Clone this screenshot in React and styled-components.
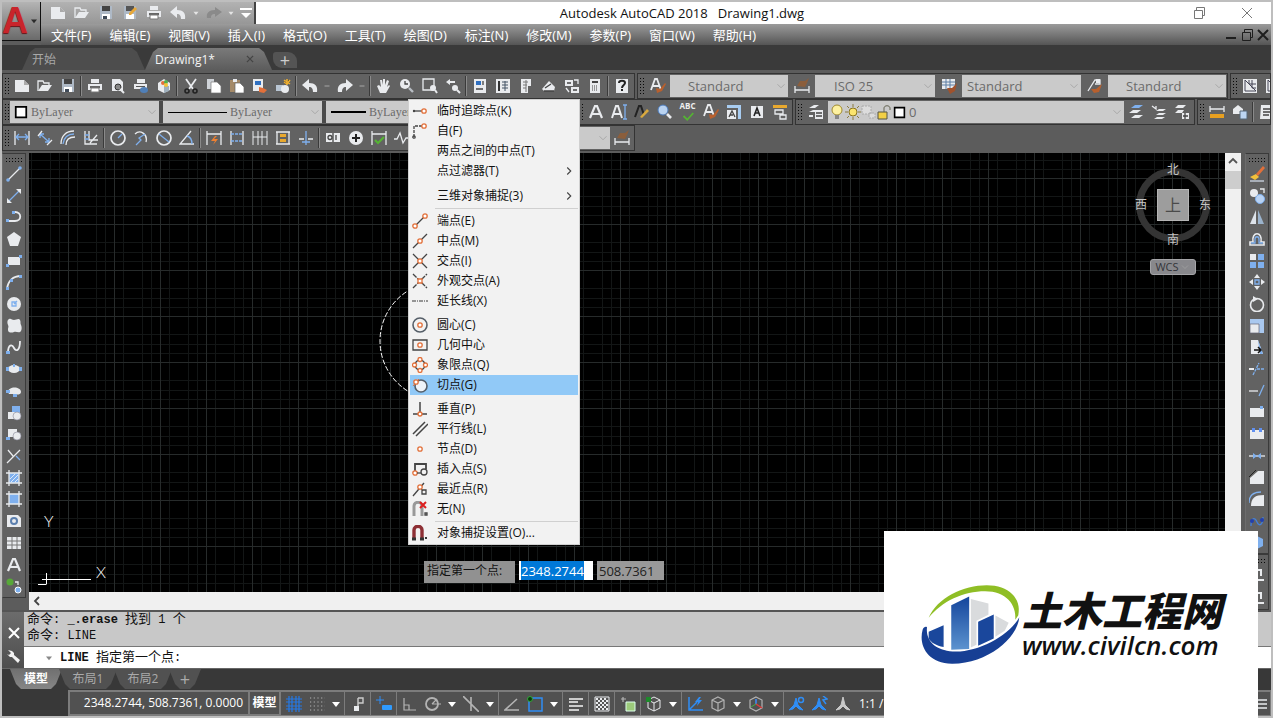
import { useEffect, useRef, useState } from 'react';
import styled, { createGlobalStyle } from 'styled-components';

const W = '#e9ebee';
const B = '#7fb0ee';
const D = '#3f4a58';
const O = '#e2703a';

const line = { fill: 'none', stroke: W, strokeWidth: 1.3 };
const blue = { fill: 'none', stroke: B, strokeWidth: 1.3 };
const dark = { fill: 'none', stroke: '#444', strokeWidth: 1.3 };
const node = { fill: '#fff', stroke: O, strokeWidth: 1.3 };
const ghost = { fill: 'none', stroke: '#b4b4b4', strokeWidth: 1.2 };
const glow = { fill: 'none', stroke: '#2f8df5', strokeWidth: 1.5 };

const icons = {
  new: <><path d="M1 2h9l5 5v7H1z" fill={W} /><path d="M10 2v5h5" fill="#aaa" /></>,
  open: <><path d="M1 13V3h5l1 2h5v3" {...line} /><path d="M1 13l4-6h10l-4 6z" fill={W} /></>,
  save: <><path d="M2 1h12v13H2z" fill="#aeb9c6" /><path d="M4 1h8v5H4z" fill="#444" /><path d="M4 9h8v5H4z" fill="#fff" /><path d="M5 11h4v3H5z" fill={D} /></>,
  saveAs: <><path d="M2 1h12v13H2z" fill="#aeb9c6" /><path d="M4 1h8v5H4z" fill="#555" /><path d="M4 9h8v5H4z" fill="#fff" /><path d="M7 8l6-6 2 2-6 6H7z" fill="#e8a838" /></>,
  print: <><path d="M4 1h8v4H4zM1 6h14v6H1z" fill={W} /><path d="M3 8h10v2H3z" fill="#666" /><path d="M4 10h8v4H4z" fill="#fff" stroke="#777" /></>,
  preview: <><path d="M2 1h8l3 3v9H2z" fill={W} /><circle cx="8" cy="9" r="3" fill="#888" stroke="#333" /><path d="M10 11l4 4" stroke={W} strokeWidth="2" /></>,
  publish: <><path d="M4 1h8v4H4zM1 6h13v5H1z" fill={W} /><path d="M3 8h9v1H3z" fill="#555" /><ellipse cx="11" cy="12" rx="4" ry="3" fill="#4f7fb8" /></>,
  print3d: <><path d="M2 5l6-4 6 4v7l-6 3-6-3z" fill={W} /><path d="M8 8h5v5l-5 2z" fill="#9fb0bd" /><circle cx="7" cy="5" r="2" fill="#e2703a" /><circle cx="10" cy="4" r="2" fill="#4cae50" /><circle cx="10" cy="7" r="2" fill="#f1c232" /></>,
  cut: <><path d="M3 1l7 10M13 1L6 11" stroke={W} strokeWidth="1.8" /><circle cx="4" cy="13" r="2" fill="none" stroke="#222" strokeWidth="1.6" /><circle cx="12" cy="13" r="2" fill="none" stroke="#222" strokeWidth="1.6" /></>,
  copy: <><path d="M1 1h7v10H1z" fill="#cfd3d8" /><path d="M5 4h6l4 4v7H5z" fill="#fff" stroke="#777" strokeWidth=".7" /></>,
  paste: <><path d="M1 2h10v12H1z" fill="#a58a68" /><path d="M4 1h4v3H4z" fill={W} /><path d="M6 5h5l4 4v6H6z" fill="#fff" stroke="#666" strokeWidth=".7" /></>,
  match: <><path d="M1 1h10v12H1z" fill={W} /><path d="M3 3h6v4H3z" fill="#2f6fc0" /><path d="M7 9l4 1 4 2-3 3-5-1z" fill={O} /></>,
  block: <><path d="M1 7h7v6H1z" fill="#b9c6d4" /><circle cx="10" cy="11" r="4" fill={W} /><path d="M9 4l3 2 3-4M12 1v6M9 2l6 4" stroke="#f0b030" strokeWidth="1.5" /></>,
  undo: <path d="M0 7l7-6v4c6 0 9 3 8 9h-4c0-3-1-5-4-5v4z" fill={W} />,
  redo: <path d="M16 7L9 1v4c-6 0-9 3-8 9h4c0-3 1-5 4-5v4z" fill={W} />,
  redoDim: <path d="M16 7L9 2v3c-6 0-9 3-8 8h4c0-3 1-4 4-4v3z" fill="#8a8a8a" />,
  pan: <path d="M4 15L1 8l2-1 2 2-1-7h2l1 5V1h2v6l2-5 2 1-2 6 2-2 1 1-4 7z" fill={W} />,
  zoom: <><circle cx="6" cy="6" r="5" fill={W} /><path d="M6 3v3h3" {...dark} /><path d="M10 10l4 4" stroke="#b9bec4" strokeWidth="2.4" /></>,
  zoomWindow: <><path d="M1 1h11v11H1z" {...line} /><circle cx="11" cy="10" r="3" fill={W} /><path d="M13 12l2 3" stroke={W} strokeWidth="2" /></>,
  zoomPrev: <><path d="M1 4l4-3v2h5v2H5v2z" fill={W} /><circle cx="10" cy="10" r="3" fill={W} /><path d="M12 12l3 3" stroke={W} strokeWidth="2" /></>,
  props: <><path d="M2 1h12v14H2z" fill={W} /><path d="M4 3h5v4H4z" fill="#2f6fc0" /><path d="M4 11h7M11 3v4" {...dark} /></>,
  design: <><path d="M1 1h14v14H1z" fill={W} /><path d="M3 3h2v10H3z" fill="#333" /><path d="M7 4h6M7 7h6M7 10h6M10 3v10" stroke="#456" /></>,
  palette: <><path d="M3 1h10v7h-3v7H3z" fill={W} /><path d="M5 4h5M5 7h4M5 10h3M8 2v12" stroke="#777" /></>,
  sheet: <><path d="M1 11l7-8 6 6-1 4H3z" fill={W} /><path d="M4 10l6-4M3 13h10" {...dark} /></>,
  markup: <><path d="M1 2h8v6H1zM7 9h8v6H7z" fill={W} /><path d="M10 2h4v4M2 10l3 4" {...line} /><path d="M3 5h4M9 12h4" {...dark} /></>,
  calc: <><path d="M3 1h10v14H3z" fill={W} /><path d="M5 3h6v2H5z" fill="#444" /><path d="M5 8h6M5 10h6M5 12h6" stroke="#444" strokeDasharray="1 1" /></>,
  help: <><path d="M2 1h12v14H2z" fill={W} /><path d="M5 5c0-3 6-3 6 0 0 2-3 2-3 5M8 11v2" fill="none" stroke="#222" strokeWidth="2" /></>,
  brushText: <><path d="M1 12L5 1h2l4 11M3 8h6" {...line} strokeWidth="1.8" /><path d="M6 10l4 1 5-6 1 1-4 7-5 2z" fill="#b8602e" /></>,
  brushDim: <><path d="M1 8v7M15 8v7M1 12h14" {...line} /><path d="M3 8l3-5 5 0 4-3-2 5-2 4z" fill="#8b5e3c" /></>,
  brushTable: <><path d="M1 1h13v10H1z" fill={W} /><path d="M1 4h13M1 7h13M5 1v10M9 1v10" stroke="#5d7ea5" /><path d="M6 10l5 0 5-5-2 8-5 3z" fill="#a0522d" /></>,
  brushLeader: <><path d="M1 13L8 2h5v4H8" {...line} /><path d="M9 1h4v4H9z" fill={W} /><path d="M4 11l5 0 6-5-3 8-5 1z" fill="#b8602e" /></>,
  tableDraw: <><path d="M1 1h14v14H1z" fill={W} /><path d="M3 2v11h11zM7 2v4h7M10 2v8h4" stroke="#445" fill="none" /></>,
  tableEdit: <><path d="M1 1h14v14H1z" fill={W} /><path d="M3 2v11h11zM8 3l5 5" stroke="#445" fill="none" /></>,
  textA: <path d="M2 14L7 2h2l5 12M4 10h8" fill="none" stroke={W} strokeWidth="2.2" />,
  textCursor: <><path d="M1 14L5 2h2l4 12M3 10h6" {...line} strokeWidth="2" /><path d="M12 1h4M14 1v14M12 15h4" {...blue} /></>,
  textEdit: <><path d="M1 13L5 2h2l3 9" stroke="#222" fill="none" strokeWidth="2" /><path d="M6 13l7-8 2 2-7 7z" fill="#d9a93e" /></>,
  textFind: <><circle cx="6" cy="6" r="5" fill="#b9d2f0" stroke="#4b79b8" /><path d="M10 10l4 4" stroke={W} strokeWidth="2.6" /></>,
  spell: <path d="M2 8l5 5 8-9" fill="none" stroke="#55b334" strokeWidth="2.4" />,
  textScale: <><path d="M1 1h14v14h-3V4H1z" fill="#a8ccf0" /><path d="M1 6h9v9H1z" fill={W} /><path d="M3 13l3-6 3 6M4 11h3" {...dark} /></>,
  textBox: <><path d="M2 2h12v12H2z" fill={W} /><path d="M5 12l3-8 3 8M6 9h4" stroke="#222" fill="none" strokeWidth="1.6" /></>,
  textSpace: <><path d="M1 1h14v3H1z" fill="#e9a92e" /><path d="M3 6h8v4H3zM8 11h6v4H8z" {...line} /></>,
  layers: <><path d="M1 4l5-3h5L7 4zM1 8l4-2h2v2zM1 11h4v2H1z" fill={W} /><path d="M7 6h8v9H7z" fill={W} /><path d="M8 9h6M8 12h6" {...dark} /></>,
  layerBlue: <><path d="M3 4l4-3h8l-4 3z" fill={B} /><path d="M1 9l4-3h8l-4 3zM3 14l4-3h8l-4 3z" fill={W} /></>,
  layerMove: <><path d="M1 2l4 3V2" {...line} /><path d="M5 7l3-2h7l-3 2zM5 11l3-2h7l-3 2zM3 15l3-2h8l-3 2z" fill={W} /></>,
  layerState: <><path d="M1 4l3-3h8L9 4zM1 9l3-3h6L8 9z" fill={W} /><path d="M8 9h7v6H8z" fill={W} /><path d="M9 12h5M11 9v6" {...dark} /></>,
  bulb: <><circle cx="8" cy="6" r="5" fill="#fdf1a0" stroke="#a08a30" /><path d="M6 11h4v4H6z" fill="#888" /></>,
  sun: <><circle cx="8" cy="8" r="4" fill="#fbe46d" stroke="#8a7420" /><path d="M8 0v3M8 13v3M0 8h3M13 8h3M2 2l2 2M12 12l2 2M14 2l-2 2M2 14l2-2" stroke="#8a7a40" /></>,
  frozen: <path d="M1 2h9v8H1zM8 9h6v5H8z" fill="#dcdcdc" stroke="#aaa" strokeDasharray="2 1" />,
  lock: <><path d="M1 8h9v7H1z" fill="#f2cf45" stroke="#554" /><path d="M7 8V4c0-3 6-3 6 0v2" fill="none" stroke="#665" /></>,
  swatch: <path d="M2 2h12v12H2z" fill="#fff" stroke="#000" strokeWidth="2" />,
  measure: <><path d="M1 2v6M15 2v6M1 5h14" {...line} /><path d="M1 10h14v4H1z" fill="#e8a020" /></>,
  layerCopy: <><path d="M1 5l5-4 5 4v5H1z" fill={W} /><path d="M8 7h7v8H8z" fill="#bcd5f2" stroke="#567" /></>,
  list: <><path d="M2 1h12l-2 14H1z" fill={W} /><path d="M4 5h8M4 8h7M4 11h6" {...dark} /></>,
  dimLinear: <><path d="M1 1v14M15 1v14" {...line} /><path d="M2 7h12M5 4L2 7l3 3M11 4l3 3-3 3" {...blue} /></>,
  dimAligned: <><path d="M3 4l9 8M3 4v4M3 4h4M12 12V8M12 12H8" {...blue} /><path d="M1 6l4-5M10 15l5-5" {...line} /></>,
  dimArc: <><path d="M1 14C1 6 6 1 14 1M6 15c0-5 3-8 9-8" {...line} /><path d="M3 14C4 7 8 4 14 4" {...blue} /></>,
  dimOrd: <><path d="M2 1v13h12M6 1v9h9M7 13l7-8" {...line} /><path d="M2 5h4M2 9h4" {...blue} /></>,
  radius: <><circle cx="8" cy="8" r="7" {...line} strokeWidth="1.7" /><path d="M8 8l4-4" {...blue} /></>,
  jogged: <><path d="M2 4c5-5 13 0 11 8" {...line} /><path d="M3 15l5-5-2-2 6-4" {...blue} /></>,
  diameter: <><circle cx="8" cy="8" r="7" {...line} strokeWidth="1.7" /><path d="M3 4l10 8" {...blue} /></>,
  angular: <><path d="M15 14H1L12 1" {...line} /><path d="M8 6c4 1 5 4 5 8" {...blue} /></>,
  dimQuick: <><path d="M1 1v14M15 1v14M1 4h14" {...line} /><path d="M9 6l-4 5h4l-2 4 5-6H8l3-3z" fill="#f08030" /></>,
  dimBase: <><path d="M2 1v14M14 1v14" {...line} /><path d="M2 4h12M2 11h12" {...blue} strokeDasharray="3 1" /></>,
  dimCont: <path d="M1 1v14M6 1v14M10 1v14M15 1v14M1 7h14" {...line} strokeWidth="1" />,
  dimSpace: <><path d="M1 2h14M1 14h14M2 2v12M14 2v12" {...line} /><path d="M5 4h6v3H5zM5 9h6v3H5z" fill="#e9a92e" /></>,
  dimBreak: <><path d="M1 9h5M10 9h5" {...line} /><path d="M8 1v14M4 12h8" {...blue} /></>,
  tolerance: <><path d="M1 3h14v9H1z" fill={W} /><path d="M8 3v9" {...dark} /><circle cx="5" cy="7.5" r="2" {...dark} /><path d="M11 5v5" {...dark} /></>,
  center: <><circle cx="8" cy="8" r="7" fill={W} /><path d="M8 4v8M4 8h8" stroke="#222" strokeWidth="2" /></>,
  inspect: <><path d="M1 1v14M15 1v14M1 4h14" {...line} /><path d="M4 10l3 3 6-6" fill="none" stroke="#55b334" strokeWidth="2.2" /></>,
  jog: <path d="M0 9h3l3-6 3 10 3-5h4" {...line} />,
  line: <><path d="M2 14L14 2" {...line} /><circle cx="2" cy="14" r="1.8" fill={B} /><circle cx="14" cy="2" r="1.8" fill={B} /></>,
  xline: <><path d="M3 13L13 3" {...blue} /><path d="M1 15v-5l5 5zM15 1v5l-5-5z" fill={W} /></>,
  pline: <><path d="M1 12h8c7 0 7-9 0-9H7" {...line} strokeWidth="1.8" /><path d="M0 10h3v3H0zM6 2h3v3H6z" fill={B} /></>,
  polygon: <path d="M8 1l7 5-3 9H4L1 6z" fill={W} />,
  rect: <><path d="M2 4h12v8H2z" fill={W} /><path d="M0 11h3v3H0zM13 2h3v3h-3z" fill={B} /></>,
  arc: <><path d="M1 15C2 7 7 2 15 2" {...line} strokeWidth="1.8" /><path d="M4 5h3v3H4zM0 13h3v3H0zM13 1h3v3h-3z" fill={B} /></>,
  circle: <><circle cx="8" cy="8" r="7" fill={W} /><path d="M8 8l3-3M6 6h4v4H6z" {...blue} /></>,
  cloud: <path d="M3 1c2-1 3 1 5 1s5-2 6 0 0 3 1 5 1 6-1 7-4-1-6 0-6 1-6-2 1-3 0-5-1-5 1-6z" fill={W} />,
  spline: <><path d="M2 14c0-9 4-9 6-5s6 3 6-7" {...line} strokeWidth="1.8" /><path d="M0 12h4v3H0z" fill={B} /></>,
  ellipse: <><ellipse cx="8" cy="8" rx="6" ry="4" fill={W} /><path d="M0 6h3v4H0zM13 6h3v4h-3zM7 3h2v3H7z" fill={B} /></>,
  ellipseArc: <><path d="M2 9c0-6 13-6 13 0 0 3-5 3-6 2H3z" fill={W} /><path d="M0 7h4v3H0zM7 11h4v3H7z" fill={B} /></>,
  insert: <><path d="M6 1h8v8H6z" fill={B} /><path d="M2 7h7v7H2z" fill={W} /><circle cx="11" cy="11" r="4" fill={W} stroke="#889" strokeWidth=".6" /></>,
  makeBlock: <><path d="M2 3h9v8H2z" fill={W} /><circle cx="11" cy="10" r="4" fill={W} stroke="#889" strokeWidth=".6" /><path d="M0 11h4v3H0z" fill={B} /></>,
  point: <><path d="M2 2l5 6M1 15L14 2" {...line} /><path d="M10 8l4 4" {...blue} /></>,
  hatch: <><path d="M3 3h10v10H3z" fill={B} /><path d="M3 0v16M13 0v16M0 3h16M0 13h16" {...line} /><path d="M4 9l5-5M5 12l7-7M9 12l3-3" stroke="#dce9fa" /></>,
  gradient: <><path d="M3 3h10v10H3z" fill={B} /><path d="M3 0v16M13 0v16M0 3h16M0 13h16" {...line} /></>,
  region: <><path d="M1 2h11l3 3v9H1z" fill={W} /><circle cx="8" cy="8" r="4" fill="#5b7fae" /><circle cx="8" cy="8" r="2" fill={W} /></>,
  table: <><path d="M1 2h14v12H1z" fill={W} /><path d="M1 6h14M1 10h14M6 2v12M11 2v12" stroke="#777" /></>,
  addSel: <><circle cx="4" cy="4" r="3.5" fill="#57a839" /><circle cx="12" cy="12" r="3" fill={B} stroke="#fff" /><path d="M9 4h3v3" {...line} /></>,
  erase: <><path d="M1 15h14" {...line} stroke="#cfd8e6" /><path d="M1 11l6-3 3 3-4 3z" fill="#f2c13a" /><path d="M7 8l7-8 2 2-7 8z" fill={O} /></>,
  copyObj: <><circle cx="5" cy="5" r="4" fill={W} /><circle cx="11" cy="11" r="4.5" fill="#b8d2f3" stroke={B} /><path d="M11 1h4v4" {...line} /></>,
  mirror: <><path d="M7 1v14H1z" fill="#dde3ea" /><path d="M9 1v14h6z" fill="#9bb3cc" /></>,
  offset: <><path d="M1 14h14v-3h-3c2-11-10-11-8 0H1z" fill="none" stroke={W} strokeWidth="1.6" /><path d="M2 12h4V8c0-3 4-3 4 0v4h4" {...blue} /></>,
  array: <><path d="M1 1h6v6H1z" fill={W} /><path d="M9 1h6v6H9zM1 9h6v6H1zM9 9h6v6H9z" fill={B} /></>,
  move: <><path d="M8 0l3 4H5zM8 16l3-4H5zM0 8l4-3v6zM16 8l-4-3v6z" fill={W} /><path d="M6 6h4v4H6z" {...blue} /></>,
  rotate: <><circle cx="8" cy="9" r="6.5" {...line} strokeWidth="1.6" /><path d="M4 0l5 3-5 3z" fill={W} /></>,
  scale: <><path d="M1 1h14v14H1z" fill="#a9c8ef" /><path d="M1 6h9v9H1z" fill={W} stroke="#667" strokeWidth=".7" /></>,
  stretch: <><path d="M2 1h7l5 14H2z" fill={W} /><path d="M9 1l5 14h-3z" fill={B} /><path d="M5 11h7M9 8l3 3-3 3" stroke="#111" fill="none" strokeWidth="1.5" /></>,
  trim: <><path d="M0 8h5" {...line} strokeWidth="2" /><path d="M4 14l6-12M8 8h8" {...blue} strokeDasharray="3 1" /></>,
  extend: <><path d="M0 8h9" {...line} /><path d="M10 13l5-11" {...blue} /></>,
  breakPt: <><path d="M1 4h14v9H1z" fill={W} /><path d="M11 2h3v3h-3z" fill={B} /></>,
  break: <><path d="M1 4h14v9H1z" fill={W} /><path d="M3 2h3v4H3zM10 2h3v4h-3z" fill="#5f8ff0" /></>,
  join: <><path d="M0 8h16" {...line} /><path d="M4 5l4 3-4 3zM12 5L8 8l4 3z" fill={B} /></>,
  chamfer: <><path d="M1 15V9l8-7h6v13z" fill={W} /><path d="M0 8l7-7" stroke="#222" /></>,
  fillet: <><path d="M2 15c0-8 4-11 13-11v11z" fill={W} /><path d="M0 12C0 4 5 1 12 1" {...blue} /></>,
  blend: <><path d="M2 13c0-9 4-9 6-4s6 3 6-5" {...blue} stroke="#4580d8" /><circle cx="3" cy="8" r="2" fill="#223fae" /><circle cx="13" cy="7" r="2" fill="#223fae" /></>,
  explode: <><path d="M8 2l6 3v7l-6 3z" fill={B} /><path d="M2 5l6-3v7l-6 3z" fill={W} /></>,
  stack: <><path d="M6 3h6v6M3 13h12" {...line} strokeWidth="2" /></>,
  snap: <><path d="M8 2h5v5H8M8 2v11" fill="none" stroke="#ccc" strokeWidth="1.4" /><path d="M4 10h5v5H4z" fill={W} /></>,
  grid: <path d="M3 0v16M6 0v16M10 0v16M13 0v16M0 3h16M0 6h16M0 10h16M0 13h16" stroke="#2479e6" strokeWidth="1.2" />,
  dots: <path d="M1 2h15M1 6h15M1 10h15M1 14h15" stroke="#b4b4b4" strokeWidth="1.2" strokeDasharray="1.2 2.5" />,
  dyn: <><path d="M4 0v8M0 4h8" {...glow} strokeWidth="1" /><rect x="6" y="9" width="10" height="5" rx="1" fill="#2f9bff" /></>,
  ortho: <path d="M2 2v12h12M2 9h5v5" {...ghost} />,
  polar: <><circle cx="7" cy="8" r="6" {...ghost} strokeWidth="1.8" /><path d="M7 8h9M7 8l5-5" {...ghost} /></>,
  iso: <path d="M0 0l16 16M8 1v14" {...ghost} strokeWidth="1.6" />,
  otrack: <path d="M15 14H1L13 3" {...ghost} strokeWidth="1.6" />,
  osnap: <><path d="M2 2h13v13H2z" {...glow} /><circle cx="3" cy="3" r="2.5" fill="#0a3d0d" stroke="#35a53a" /></>,
  weight: <path d="M1 3h14M1 6h9M1 10h14M1 14h10" stroke="#ccc" strokeWidth="2" />,
  trans: <><path d="M1 1h14v14H1z" fill="#555" stroke={W} /><path d="M2 3h12M2 7h12M2 11h12" stroke={W} strokeWidth="2" strokeDasharray="2 2" /><path d="M4 5h11M4 9h11M4 13h11" stroke={W} strokeWidth="2" strokeDasharray="2 2" /></>,
  cycle: <><path d="M3 1v5M1 3h5" {...ghost} /><path d="M6 6h9v9H6z" fill="#9cca7b" stroke="#dfe" /></>,
  cube: <path d="M8 1l6 3v8l-6 3-6-3V4zM2 4l6 3 6-3M8 7v8" {...ghost} />,
  cubeSnap: <><path d="M8 1l6 3v8l-6 3-6-3V4zM2 4l6 3 6-3M8 7v8" fill="none" stroke={W} /><path d="M0 1h5v5H0z" fill="#1c8a2a" /></>,
  ucs: <><path d="M2 1v13h14M2 14l8-8" {...glow} /><path d="M12 1L8 6h3l-1 4 5-6h-3l2-3z" fill="#2f8df5" /></>,
  gizmo: <><path d="M8 1l6 3v8l-6 3-6-3V4z" {...ghost} /><path d="M8 3v5" stroke="#3c8cff" strokeWidth="1.5" /><path d="M8 8l6 4" stroke="#e03a3a" strokeWidth="1.5" /><path d="M8 8l-5 3" stroke="#4a4" /></>,
  scaleBlue: <><path d="M7 2l2 7 5 5-4-1-3-3-3 3-4 1 5-5z" fill="#2f8df5" stroke="#2f8df5" /><circle cx="12" cy="4" r="2.5" {...glow} /></>,
  scaleAuto: <><path d="M7 2l2 7 5 5-4-1-3-3-3 3-4 1 5-5z" fill="#2f8df5" stroke="#2f8df5" /><path d="M11 0l4 3-4 1 3 4" {...glow} /></>,
  scaleGrey: <path d="M8 1l2 8 5 5-4-1-3-3-3 3-4 1 5-5z" fill="#c9c9c9" stroke="#c9c9c9" />,
  lines: <path d="M1 4h14M1 8h14M1 12h14" stroke={W} strokeWidth="1.5" />,
  mTrack: <><path d="M2 8h8" {...dark} /><circle cx="2" cy="8" r="1.2" fill="#444" /><circle cx="12" cy="8" r="2.2" {...node} /></>,
  mFrom: <><path d="M2 14V3h8" {...dark} strokeDasharray="3 1" /><circle cx="12" cy="3" r="2.2" {...node} /><circle cx="2" cy="14" r="1.2" {...dark} /></>,
  mEnd: <><path d="M3 13L13 3" {...dark} /><circle cx="3" cy="13" r="2.2" {...node} /><circle cx="13" cy="3" r="2.2" {...node} /></>,
  mMid: <><path d="M1 15L15 1" {...dark} /><circle cx="8" cy="8" r="2.2" {...node} /></>,
  mInt: <><path d="M1 1l14 14M1 15L15 1" {...dark} /><circle cx="8" cy="8" r="2.2" {...node} /></>,
  mApp: <><path d="M1 1l14 14M1 15L15 1" {...dark} strokeDasharray="5 1" /><path d="M6 6h4v4H6z" {...node} /></>,
  mExt: <path d="M0 8h16" {...dark} stroke="#777" strokeDasharray="4 1 1 1" />,
  mCen: <><circle cx="8" cy="8" r="7" {...dark} stroke="#555e68" strokeWidth="1.6" /><circle cx="8" cy="8" r="2.2" {...node} /></>,
  mGeo: <><path d="M1 3h14v10H1z" {...dark} /><circle cx="8" cy="8" r="2.2" {...node} /></>,
  mQuad: <><circle cx="8" cy="8" r="5" {...dark} /><circle cx="8" cy="2.5" r="2" {...node} /><circle cx="8" cy="13.5" r="2" {...node} /><circle cx="2.5" cy="8" r="2" {...node} /><circle cx="13.5" cy="8" r="2" {...node} /></>,
  mTan: <><circle cx="9" cy="9" r="6" fill="#eef3f8" stroke="#555e68" strokeWidth="1.6" /><path d="M1 9l6-7" stroke={O} /><circle cx="4" cy="5" r="2.2" {...node} /></>,
  mPer: <><path d="M8 1v12M1 13h14" {...dark} strokeWidth="1.5" /><circle cx="8" cy="13" r="2" {...node} /></>,
  mPar: <path d="M1 13L13 1M4 15L16 3" {...dark} strokeWidth="1.5" />,
  mNode: <circle cx="8" cy="8" r="2.2" {...node} />,
  mIns: <><path d="M3 10V3h11v5" {...dark} strokeWidth="1.8" /><circle cx="3" cy="12" r="2.2" {...node} /><circle cx="12" cy="11" r="3" {...dark} /><path d="M5 12h4" {...dark} /></>,
  mNear: <><path d="M1 15L12 2" {...dark} /><path d="M6 4l5 6" stroke={O} /><circle cx="8" cy="6" r="2.2" {...node} /><path d="M10 9h4v4h-4z" {...dark} /></>,
  mNone: <><path d="M2 15V5c0-5 8-5 8 0v10" fill="none" stroke="#999" strokeWidth="3" /><path d="M8 1l6 6M14 1L8 7" stroke="#dd1f1f" strokeWidth="2" /><path d="M13 12h2v2h-2z" {...dark} /></>,
  mSet: <><path d="M2 15V5c0-5 8-5 8 0v10" fill="none" stroke="#8d2f35" strokeWidth="3.4" /><path d="M0 14h4M8 14h4" stroke="#333" strokeWidth="3" /><path d="M13 12h2v2h-2z" fill="#333" /></>,
  wrench: <path d="M2 2l4 1 2 2v2l6 5-2 3-6-6H4L1 6l2 1 2-2z" fill="#f2f2f2" />,
  close: <path d="M3 3l10 10M13 3L3 13" fill="none" stroke="currentColor" strokeWidth="2" />,
  closeThin: <path d="M3 3l10 10M13 3L3 13" fill="none" stroke="currentColor" />,
  restore: <path d="M3.500 5.500h8v8h-8zM5.500 5.500v-3h8v8h-2" fill="none" stroke="currentColor" />,
  minimize: <path d="M3 11h10" stroke="currentColor" strokeWidth="2" />,
  up: <path d="M4 10l4-4 4 4" fill="none" stroke="#555" strokeWidth="1.8" />,
  left: <path d="M10 4L6 8l4 4" fill="none" stroke="#444" strokeWidth="1.8" />,
  right: <path d="M6 4l4 4-4 4" {...dark} />,
  down: <path d="M4 6l4 4 4-4" fill="none" stroke="#a2a2a2" />,
  caret: <path d="M4 6h8l-4 5z" fill="currentColor" />,
  bar: <path d="M4 8h8" stroke="#999" strokeWidth="2" />,
  customize: <><path d="M2 4h12" stroke="#fff" strokeWidth="2" /><path d="M3 8h10l-5 5z" fill="#fff" /></>,
};

const Icon = ({ name, size = 16 }) => (
  <svg width={size} height={size} viewBox="0 0 16 16" aria-hidden="true">{icons[name]}</svg>
);

function Tool({ name, ...rest }) {
  return <IconButton type="button" aria-label={name} {...rest}><Icon name={name} /></IconButton>;
}

// '|' draws a divider and 'v' a small drop arrow
function Tools({ list }) {
  return list.map((name, i) => {
    if (name === '|') return <Divider key={i} />;
    if (name === 'v') return <SlimButton key={i} type="button" aria-label="more"><Icon name="bar" size={10} /></SlimButton>;
    if (name === 'spell') {
      return <SpellButton key={i} type="button"><span>ABC</span><Icon name="spell" size={12} /></SpellButton>;
    }
    return <Tool key={i} name={name} />;
  });
}

function Combo({ label, value, width, indent, serif, children }) {
  return (
    <ComboBox $width={width} $indent={indent}>
      {children}
      <Select aria-label={label} $serif={serif} defaultValue={value}>
        <option>{value}</option>
      </Select>
      <Icon name="down" size={14} />
    </ComboBox>
  );
}

const menus = ['文件(F)', '编辑(E)', '视图(V)', '插入(I)', '格式(O)', '工具(T)', '绘图(D)', '标注(N)', '修改(M)', '参数(P)', '窗口(W)', '帮助(H)'];

const standardTools = ['new', 'open', 'save', '|', 'print', 'preview', 'publish', 'print3d', '|', 'cut', 'copy', 'paste', 'match', 'block', '|',
  'undo', 'v', 'redo', 'v', '|', 'pan', 'zoom', 'zoomWindow', 'zoomPrev', '|', 'props', 'design', 'palette', 'sheet', 'markup', 'calc', '|', 'help'];
const textTools = ['textA', 'textCursor', 'textEdit', 'textFind', 'spell', 'brushText', 'textScale', 'textBox', 'textSpace'];
const dimTools = ['dimLinear', 'dimAligned', 'dimArc', 'dimOrd', '|', 'radius', 'jogged', 'diameter', 'angular', '|',
  'dimQuick', 'dimBase', 'dimCont', 'dimSpace', 'dimBreak', '|', 'tolerance', 'center', 'inspect', 'jog', '|', 'dimLinear', 'dimAligned', 'dimBase'];
const drawTools = ['line', 'xline', 'pline', 'polygon', 'rect', 'arc', 'circle', 'cloud', 'spline', 'ellipse', 'ellipseArc',
  'insert', 'makeBlock', 'point', 'hatch', 'gradient', 'region', 'table', 'textA', 'addSel'];
const modifyTools = ['erase', 'copyObj', 'mirror', 'offset', 'array', 'move', 'rotate', 'scale', 'stretch', 'trim', 'extend',
  'breakPt', 'break', 'join', 'chamfer', 'fillet', 'blend', 'explode'];

const snapItems = [
  { icon: 'mTrack', text: '临时追踪点(K)' },
  { icon: 'mFrom', text: '自(F)' },
  { text: '两点之间的中点(T)' },
  { text: '点过滤器(T)', more: true },
  { gap: 5 },
  { text: '三维对象捕捉(3)', more: true },
  { gap: 5, rule: true },
  { icon: 'mEnd', text: '端点(E)' },
  { icon: 'mMid', text: '中点(M)' },
  { icon: 'mInt', text: '交点(I)' },
  { icon: 'mApp', text: '外观交点(A)' },
  { icon: 'mExt', text: '延长线(X)' },
  { gap: 4 },
  { icon: 'mCen', text: '圆心(C)' },
  { icon: 'mGeo', text: '几何中心' },
  { icon: 'mQuad', text: '象限点(Q)' },
  { icon: 'mTan', text: '切点(G)' },
  { gap: 4 },
  { icon: 'mPer', text: '垂直(P)' },
  { icon: 'mPar', text: '平行线(L)' },
  { icon: 'mNode', text: '节点(D)' },
  { icon: 'mIns', text: '插入点(S)' },
  { icon: 'mNear', text: '最近点(R)' },
  { icon: 'mNone', text: '无(N)' },
  { gap: 4, rule: true },
  { icon: 'mSet', text: '对象捕捉设置(O)...' },
];

const statusGroups = [
  ['grid', 'dots', 'caret'], ['snap'], ['dyn'], ['ortho', 'polar', 'caret', 'iso', 'caret'], ['otrack', 'osnap', 'caret'],
  ['weight'], ['trans'], ['cycle'], ['cubeSnap', 'caret'], ['ucs', 'cube', 'caret', 'gizmo', 'caret'],
];

function TitleBar() {
  return (
    <Header>
      <AppButton type="button" aria-label="AutoCAD"><b>A</b><Icon name="caret" size={12} /></AppButton>
      <TitleRow>
        <QuickAccess>
          {['new', 'open', 'save', 'saveAs', 'print', 'undo'].map(name => <Tool key={name} name={name} $w={24} />)}
          <SlimButton type="button" aria-label="undo list"><Icon name="caret" size={10} /></SlimButton>
          <Tool name="redoDim" />
          <SlimButton type="button" aria-label="redo list"><Icon name="caret" size={10} /></SlimButton>
          <Tool name="customize" $w={17} />
        </QuickAccess>
        <Title>Autodesk AutoCAD 2018 &nbsp; Drawing1.dwg</Title>
        <WindowButtons>
          <Tool name="restore" $w={48} />
          <Tool name="closeThin" $w={48} />
        </WindowButtons>
      </TitleRow>
      <MenuBar>
        {menus.map(text => <MenuLink key={text} href="#">{text}</MenuLink>)}
        <DocButtons>
          <Tool name="minimize" $w={16} /><Tool name="restore" $w={16} /><Tool name="close" $w={16} />
        </DocButtons>
      </MenuBar>
    </Header>
  );
}

function Toolbars() {
  return (
    <ToolRows>
      <ToolRow>
        <Toolbar><Grip /><Tools list={standardTools} /></Toolbar>
        <Toolbar>
          <Grip />
          <Tool name="brushText" $w={25} />
          <Combo label="文字样式" value="Standard" width={118} indent={15} />
          <Tool name="brushDim" $w={27} />
          <Combo label="标注样式" value="ISO 25" width={120} indent={16} />
          <Tool name="brushTable" $w={27} />
          <Combo label="表格样式" value="Standard" width={119} indent={2} />
          <Tool name="brushLeader" $w={27} />
          <Combo label="多重引线样式" value="Standard" width={118} indent={15} />
        </Toolbar>
        <Toolbar $grow><Grip /><Tools list={['tableDraw', 'tableEdit']} /></Toolbar>
      </ToolRow>
      <ToolRow>
        <Toolbar>
          <Grip />
          <Combo label="颜色" value="ByLayer" width={149} indent={4} serif><Icon name="swatch" size={14} /></Combo>
          <ComboGap />
          <Combo label="线型" value="ByLayer" width={159} indent={5} serif><LineSample $length={59} /></Combo>
          <ComboGap />
          <Combo label="线宽" value="ByLayer" width={160} indent={5} serif><LineSample $length={35} $thick /></Combo>
          <ComboGap />
          <Combo label="打印样式" value="ByColor" width={82} indent={5} serif />
        </Toolbar>
        <Toolbar><Grip /><Tools list={textTools} /></Toolbar>
        <Toolbar>
          <Grip />
          <Tool name="layers" $w={25} />
          <Combo label="图层" value="0" width={296} indent={1}>
            {['bulb', 'sun', 'frozen', 'lock'].map(name => <Icon key={name} name={name} />)}
            <Icon name="swatch" size={13} />
          </Combo>
          <Tools list={['layerBlue', 'layerMove', 'layerState']} />
        </Toolbar>
        <Toolbar $grow><Grip /><Tools list={['measure', 'layerCopy', '|', 'list']} /></Toolbar>
      </ToolRow>
      <ToolRow>
        <Toolbar>
          <Grip />
          <Tools list={dimTools} />
          <Combo label="当前标注样式" value="ISO 25" width={124} indent={5} />
          <Tool name="brushDim" />
        </Toolbar>
      </ToolRow>
    </ToolRows>
  );
}

function Compass() {
  return (
    <CompassBox>
      <Ring><Face type="button">上</Face></Ring>
      <North>北</North><West>西</West><East>东</East><South>南</South>
      <Wcs type="button">WCS<Icon name="down" size={12} /></Wcs>
    </CompassBox>
  );
}

function PointInput() {
  const first = useRef(null);
  useEffect(() => {
    first.current.focus();
    first.current.select();
  }, []);
  return (
    <PointBar>
      <label htmlFor="px">指定第一个点:</label>
      <Coord id="px" ref={first} defaultValue="2348.2744" $w={74} $active />
      <Coord aria-label="y" defaultValue="508.7361" $w={67} />
    </PointBar>
  );
}

function SnapMenu() {
  const [active, setActive] = useState('切点(G)');
  return (
    <MenuPanel role="menu">
      {snapItems.map((item, i) => item.gap
        ? <MenuGap key={i} $size={item.gap} $rule={item.rule} />
        : (
          <MenuItem key={i} type="button" role="menuitem" $active={active === item.text} onMouseEnter={() => setActive(item.text)}>
            <MenuIcon>{item.icon && <Icon name={item.icon} />}</MenuIcon>
            <span>{item.text}</span>
            {item.more && <Icon name="right" size={14} />}
          </MenuItem>
        ))}
    </MenuPanel>
  );
}

function Drawing() {
  return (
    <Canvas>
      <CircleShape width="120" height="120" aria-hidden="true">
        <circle cx="60" cy="60" r="59" fill="none" stroke="#fff" strokeDasharray="5 2" />
      </CircleShape>
      <Axes width="80" height="80" aria-hidden="true">
        <path d="M12.500 61v11M4 72.500h8.500M8 67.500h49" fill="none" stroke="#fff" />
        <text x="10" y="15">Y</text>
        <text x="62" y="66">X</text>
      </Axes>
      <Compass />
      <PointInput />
    </Canvas>
  );
}

function Watermark() {
  return (
    <Brand>
      <svg width="102" height="83" viewBox="140 455 305 250" aria-hidden="true">
        <defs>
          <linearGradient id="tower" x1="0" y1="0" x2="0" y2="1">
            <stop offset="0" stopColor="#14459c" /><stop offset="1" stopColor="#5c93cf" />
          </linearGradient>
        </defs>
        <path d="M165 560C190 500 270 462 340 462c66 0 106 40 95 90l-9 14c4-46-28-86-91-86-65 0-130 30-170 80z" fill="#8fbe25" />
        <path d="M292 503l53 14v34l-36 18v72l-17 8zM366 553l40 22-12 24-28 18z" fill="#d9dbdd" />
        <path d="M165 602l45-20v66c-22-4-38-14-45-26zM314 572l47-22v72l-47 22z" fill="#1a479c" />
        <path d="M233 522l54-26v158l-54 2z" fill="url(#tower)" />
        <path d="M160 588c-6 50 40 78 100 73 70-6 150-52 178-103-6 64-98 141-203 140-76-2-101-58-88-103 3-8 9-10 13-7z" fill="#173f94" />
      </svg>
      <BrandText>
        <strong>土木工程网</strong>
        <a href="#">www.civilcn.com</a>
      </BrandText>
    </Brand>
  );
}

function App() {
  return (
    <Page>
      <GlobalStyle />
      <TitleBar />
      <FileTabs>
        <FileTab type="button" $w={123}>开始</FileTab>
        <FileTab type="button" $w={127} $active>Drawing1*<Icon name="close" size={10} /></FileTab>
        <PlusTab type="button" aria-label="新图形">+</PlusTab>
      </FileTabs>
      <Toolbars />
      <Workspace>
        <Dock $left><Grip $flat />{drawTools.map((name, i) => <Tool key={i} name={name} />)}</Dock>
        <Center>
          <Viewport>
            <Drawing />
            <ScrollY><Icon name="up" size={16} /><Thumb /></ScrollY>
          </Viewport>
          <ScrollX><Icon name="left" size={16} /></ScrollX>
        </Center>
        <RightDocks>
          <Dock><Grip $flat />{modifyTools.map(name => <Tool key={name} name={name} />)}</Dock>
          <Dock $short><Grip $flat /><Tool name="stack" /><Tool name="stack" /></Dock>
        </RightDocks>
      </Workspace>
      <Command>
        <CommandSide>
          <Tool name="close" /><Tool name="wrench" />
        </CommandSide>
        <CommandBody>
          <History>
            <div><Han>命令</Han>: <b>_.erase</b> <Han>找到</Han> 1 <Han>个</Han></div>
            <div><Han>命令</Han>: LINE</div>
          </History>
          <Prompt>
            <Icon name="caret" size={12} />
            <label htmlFor="cmd"><b>LINE</b> <Han>指定第一个点</Han>:</label>
            <input id="cmd" />
          </Prompt>
        </CommandBody>
      </Command>
      <LayoutTabs>
        <LayoutTab type="button" $w={52} $active>模型</LayoutTab>
        <LayoutTab type="button" $w={58}>布局1</LayoutTab>
        <LayoutTab type="button" $w={58}>布局2</LayoutTab>
        <LayoutTab type="button" $w={32} $plus>+</LayoutTab>
      </LayoutTabs>
      <Status>
        <Readout>2348.2744, 508.7361, 0.0000</Readout>
        <ModelButton type="button">模型</ModelButton>
        {statusGroups.map((group, i) => (
          <StatusGroup key={i}>
            {group.map((name, j) => <Tool key={j} name={name} $w={name === 'caret' ? 15 : 23} />)}
          </StatusGroup>
        ))}
        <StatusGroup $grow>
          <Tool name="scaleBlue" /><Tool name="scaleAuto" /><Tool name="scaleGrey" />
          <span>1:1 / 100%</span>
          <Push><Tool name="lines" $w={18} /></Push>
        </StatusGroup>
      </Status>
      <SnapMenu />
      <Watermark />
    </Page>
  );
}
export default App;

const GlobalStyle = createGlobalStyle`
  * {
    box-sizing: border-box;
  }
  body {
    margin: 0;
    font-family: 'Open Sans', 'Noto Sans CJK SC', sans-serif;
    font-size: 13px;
  }
  button, input, select {
    font: inherit;
    color: inherit;
    margin: 0;
    padding: 0;
    border: 0;
    background: none;
    outline: none;
  }
  svg {
    display: block;
    flex: none;
  }
  a {
    color: inherit;
    text-decoration: none;
  }
`;
const Page = styled.div`
  position: relative;
  display: flex;
  flex-direction: column;
  height: 100vh;
  overflow: hidden;
  border: 2px solid #bebebe;
  background: #5c5c5c;
`;
const IconButton = styled.button`
  flex: none;
  width: ${prop => prop.$w || 23}px;
  height: 20px;
  display: flex;
  align-items: center;
  justify-content: center;
`;
const SlimButton = styled(IconButton)`
  width: 12px;
  color: #e4e4e4;
`;
const SpellButton = styled(IconButton)`
  flex-direction: column;
  color: #eee;
  font-size: 8px;
  font-weight: 700;
  line-height: 8px;
`;
const Divider = styled.i`
  flex: none;
  width: 2px;
  height: 20px;
  margin: 0 1px;
  background: #3a3a3a;
  border-right: 1px solid #8a8a8a;
`;
const Header = styled.header`
  flex: none;
  display: grid;
  grid-template-columns: 39px 1fr;
  grid-template-rows: 22px 21px;
`;
const AppButton = styled.button`
  grid-row: 1 / 3;
  display: flex;
  align-items: center;
  justify-content: center;
  height: 39px;
  border-right: 1px solid #111;
  border-bottom: 1px solid #111;
  background: linear-gradient(#b4b4b4, #6a6a6a);
  color: #2b2b2b;
  b {
    color: #c9242b;
    font: 700 36px/30px 'Liberation Sans', sans-serif;
    text-shadow: 0 1px 1px #6d1015;
  }
`;
const TitleRow = styled.div`
  display: flex;
  align-items: stretch;
  background: #fff;
`;
const QuickAccess = styled.div`
  flex: none;
  display: flex;
  align-items: center;
  padding: 0 0 0 5px;
  border-right: 2px solid #444;
  background: linear-gradient(#b2b2b2, #979797);
`;
const Title = styled.div`
  flex: 1;
  text-align: center;
  line-height: 22px;
  color: #111;
  white-space: pre;
`;
const WindowButtons = styled.div`
  display: flex;
  justify-content: flex-end;
  width: 163px;
  align-items: center;
  color: #777;
`;
const MenuBar = styled.nav`
  display: flex;
  align-items: center;
  gap: 18px;
  padding-left: 10px;
  background: linear-gradient(#9b9b9b, #555);
  color: #fff;
`;
const MenuLink = styled.a`
  line-height: 18px;
  white-space: nowrap;
`;
const DocButtons = styled.div`
  display: flex;
  margin-left: auto;
  color: #1e1e1e;
`;
const FileTabs = styled.div`
  flex: none;
  display: flex;
  align-items: flex-end;
  height: 26px;
  padding-left: 20px;
  background: #3a3a3a;
  border-bottom: 1px solid #5c5c5c;
`;
const FileTab = styled.button`
  display: flex;
  align-items: center;
  justify-content: space-between;
  width: ${prop => prop.$w}px;
  height: 22px;
  padding: 0 17px 0 10px;
  background: ${prop => prop.$active ? 'linear-gradient(#7a7a7a, #5c5c5c)' : '#4d4d4d'};
  color: ${prop => prop.$active ? '#f4f4f4' : '#a8a8a8'};
  font-size: 12px;
  clip-path: polygon(0 100%, 8px 4px, 13px 0, calc(100% - 13px) 0, calc(100% - 8px) 4px, 100% 100%);
  svg {
    color: #444;
  }
`;
const PlusTab = styled.button`
  width: 24px;
  height: 16px;
  margin: 0 0 2px 1px;
  border-radius: 3px 9px 0 9px;
  background: #545454;
  color: #ccc;
  font-size: 18px;
  line-height: 14px;
`;
const ToolRows = styled.div`
  flex: none;
  padding: 2px 0;
`;
const ToolRow = styled.div`
  display: flex;
  gap: 2px;
  height: 26px;
  overflow: hidden;
`;
const Toolbar = styled.div`
  display: flex;
  align-items: center;
  flex: ${prop => prop.$grow ? '1 1 0' : 'none'};
  min-width: 0;
  overflow: hidden;
  padding: 0 1px;
  border: 1px solid #333;
  background: #626262;
`;
const Grip = styled.i`
  flex: none;
  width: ${prop => prop.$flat ? '18px' : '6px'};
  height: ${prop => prop.$flat ? '6px' : '18px'};
  background: radial-gradient(circle, #080808 1px, transparent 1px) 0 0 / 3px 3px;
`;
const ComboBox = styled.div`
  flex: none;
  display: flex;
  align-items: center;
  width: ${prop => prop.$width}px;
  height: 22px;
  padding-left: ${prop => prop.$indent}px;
  background: #cacaca;
`;
const Select = styled.select`
  flex: 1;
  min-width: 0;
  appearance: none;
  color: #6b6b6b;
  padding-left: 3px;
  font-family: ${prop => prop.$serif ? "'Liberation Serif', serif" : 'inherit'};
  font-size: ${prop => prop.$serif ? '12px' : 'inherit'};
`;
const ComboGap = styled.i`
  width: 4px;
  height: 22px;
  background: #4b4b4b;
`;
const LineSample = styled.i`
  width: ${prop => prop.$length}px;
  height: ${prop => prop.$thick ? 2 : 1}px;
  background: #000;
`;
const Workspace = styled.main`
  flex: 1;
  min-height: 0;
  display: flex;
`;
const Dock = styled.aside`
  flex: ${prop => prop.$short ? '0 0 56px' : '1'};
  display: flex;
  flex-direction: column;
  align-items: center;
  width: 24px;
  padding-top: 3px;
  border: 1px solid #3a3a3a;
  border-left-color: #6d6d6d;
  background: #626262;
  ${prop => prop.$left && 'flex: none; margin: 0 3px 12px 0;'}
  button {
    flex: 1;
    width: 22px;
    min-height: 0;
  }
`;
const RightDocks = styled.div`
  display: flex;
  flex-direction: column;
  width: 30px;
  padding: 0 2px 0 4px;
`;
const Center = styled.div`
  flex: 1;
  min-width: 0;
  display: flex;
  flex-direction: column;
`;
const Viewport = styled.div`
  flex: 1;
  min-height: 0;
  display: flex;
`;
const Canvas = styled.section`
  position: relative;
  flex: 1;
  overflow: hidden;
  background-color: #000;
  background-image:
    linear-gradient(90deg, #272b2b 1px, transparent 1px),
    linear-gradient(#272b2b 1px, transparent 1px),
    linear-gradient(90deg, transparent 9px, #131616 9px 10px, transparent 10px 28px, #131616 28px 29px, transparent 29px 37px, #131616 37px 38px, transparent 38px),
    linear-gradient(transparent 18px, #131616 18px 19px, transparent 19px 28px, #131616 28px 29px, transparent 29px 37px, #131616 37px 38px, transparent 38px);
  background-size: 46px 46px;
  background-position: 39px 25px;
`;
const ScrollY = styled.div`
  width: 16px;
  background: #f0f0f0;
`;
const Thumb = styled.i`
  display: block;
  height: 18px;
  margin-top: 2px;
  background: #cdcdcd;
`;
const ScrollX = styled.div`
  flex: none;
  display: flex;
  align-items: center;
  height: 18px;
  background: #f0f0f0;
`;
const CircleShape = styled.svg`
  position: absolute;
  left: 350px;
  top: 128px;
`;
const Axes = styled.svg`
  position: absolute;
  left: 5px;
  bottom: 0;
  text {
    fill: #fff;
    font: 300 16px Lato, sans-serif;
  }
`;
const CompassBox = styled.div`
  position: absolute;
  top: 10px;
  right: 11px;
  display: grid;
  grid-template-columns: 18px 1fr 18px;
  grid-template-rows: 14px 56px 14px 28px;
  justify-items: center;
  align-items: center;
  width: 82px;
  color: #c4c4c4;
  font-size: 12px;
  line-height: 14px;
`;
const Ring = styled.div`
  grid-area: 1 / 1 / 4 / 4;
  display: flex;
  align-items: center;
  justify-content: center;
  width: 74px;
  height: 74px;
  border: 7px solid #343434;
  border-radius: 50%;
`;
const Face = styled.button`
  width: 32px;
  height: 32px;
  border: 1px solid #b5b5b5;
  background: #9d9d9d;
  color: #4a4a4a;
  font-size: 16px;
  line-height: 28px;
`;
const North = styled.span`
  grid-area: 1 / 2;
`;
const West = styled.span`
  grid-area: 2 / 1;
`;
const East = styled.span`
  grid-area: 2 / 3;
`;
const South = styled.span`
  grid-area: 3 / 2;
`;
const Wcs = styled.button`
  grid-area: 4 / 1 / 5 / 4;
  align-self: end;
  display: flex;
  align-items: center;
  justify-content: center;
  width: 46px;
  height: 16px;
  border: 1px solid #a5a5a8;
  border-radius: 3px;
  background: #88888c;
  color: #33343a;
  font-size: 11px;
`;
const PointBar = styled.div`
  position: absolute;
  left: 395px;
  bottom: 9px;
  display: flex;
  align-items: flex-start;
  gap: 4px;
  line-height: 20px;
  label {
    width: 91px;
    height: 22px;
    padding-left: 3px;
    background: #919191;
    color: #111;
    font-size: 12px;
    white-space: nowrap;
  }
`;
const Coord = styled.input`
  width: ${prop => prop.$w}px;
  height: 19px;
  padding: 0 2px;
  background: ${prop => prop.$active ? '#fff' : '#999'};
  color: #222;
  &::selection {
    background: #0078d7;
    color: #fff;
  }
`;
const MenuPanel = styled.div`
  position: absolute;
  left: 406px;
  top: 97px;
  width: 172px;
  padding: 1px;
  border: 1px solid #d0d0d0;
  background: #f2f2f2;
  font-size: 12px;
`;
const MenuItem = styled.button`
  display: flex;
  align-items: center;
  width: 100%;
  height: 20px;
  padding-right: 2px;
  background: ${prop => prop.$active ? '#91c9f7' : 'transparent'};
  color: #111;
  line-height: 18px;
  text-align: left;
  white-space: nowrap;
  span {
    flex: 1;
  }
`;
const MenuIcon = styled.i`
  display: flex;
  justify-content: center;
  width: 20px;
  margin-right: 7px;
`;
const MenuGap = styled.div`
  height: ${prop => prop.$size}px;
  margin-left: 25px;
  padding-top: 2px;
  &::after {
    content: '';
    display: block;
    height: 1px;
    background: ${prop => prop.$rule ? '#d0d0d0' : 'transparent'};
  }
`;
const Command = styled.section`
  flex: none;
  display: flex;
  border-top: 2px solid #555;
  color: #111;
  font-family: 'Liberation Mono', 'Noto Sans CJK SC', monospace;
  font-size: 12px;
`;
const CommandSide = styled.div`
  display: flex;
  flex-direction: column;
  justify-content: flex-end;
  gap: 3px;
  width: 22px;
  padding-bottom: 2px;
  background: linear-gradient(#6c6c6c, #4e4e4e);
  color: #fff;
`;
const CommandBody = styled.div`
  flex: 1;
`;
const History = styled.div`
  height: 35px;
  padding: 0 3px;
  border-bottom: 1px solid #777;
  background: #c8c8c8;
  line-height: 16px;
`;
const Han = styled.span`
  font-size: 13px;
`;
const Prompt = styled.div`
  display: flex;
  align-items: center;
  gap: 5px;
  height: 21px;
  padding-left: 19px;
  background: #fff;
  svg {
    color: #888;
  }
  label {
    line-height: 20px;
  }
  input {
    flex: 1;
  }
`;
const LayoutTabs = styled.div`
  flex: none;
  display: flex;
  height: 22px;
  padding-left: 8px;
  border-top: 1px solid #666;
  background: #383838;
`;
const LayoutTab = styled.button`
  width: ${prop => prop.$w}px;
  height: 20px;
  margin-right: -3px;
  background: ${prop => prop.$active ? 'linear-gradient(#707070, #868686)' : '#515151'};
  color: ${prop => prop.$active ? '#fff' : '#aaa'};
  font-size: ${prop => prop.$plus ? 18 : 12}px;
  font-weight: ${prop => prop.$active ? 700 : 400};
  line-height: 18px;
  clip-path: polygon(0 0, 100% 0, calc(100% - 6px) 75%, calc(100% - 11px) 100%, 11px 100%, 6px 75%);
`;
const Status = styled.footer`
  flex: none;
  display: flex;
  height: 26px;
  padding-left: 66px;
  background: #383838;
  color: #fff;
  font-size: 12px;
  line-height: 22px;
`;
const StatusGroup = styled.div`
  display: flex;
  align-items: center;
  flex: ${prop => prop.$grow ? '1' : 'none'};
  padding: 0 1px;
  border: 1px solid #7c7c7c;
  border-width: 2px 1px 1px 0;
  background: #515151;
  white-space: nowrap;
  span {
    padding-left: 5px;
  }
`;
const Push = styled.div`
  margin-left: auto;
`;
const Readout = styled.output`
  width: 182px;
  padding-right: 5px;
  border: 2px solid #7c7c7c;
  background: #515151;
  text-align: right;
`;
const ModelButton = styled.button`
  width: 31px;
  border: 2px solid #7c7c7c;
  border-left: 0;
  background: #515151;
  font-weight: 700;
`;
const Brand = styled.aside`
  position: fixed;
  right: 15px;
  bottom: 0;
  display: flex;
  justify-content: center;
  align-items: center;
  width: 374px;
  height: 187px;
  background: #fff;
`;
const BrandText = styled.div`
  display: flex;
  flex-direction: column;
  gap: 4px;
  color: #111;
  strong {
    font: italic 900 40px/36px 'Noto Sans CJK SC', sans-serif;
  }
  a {
    font: italic 600 26px/28px 'Open Sans', sans-serif;
  }
`;
